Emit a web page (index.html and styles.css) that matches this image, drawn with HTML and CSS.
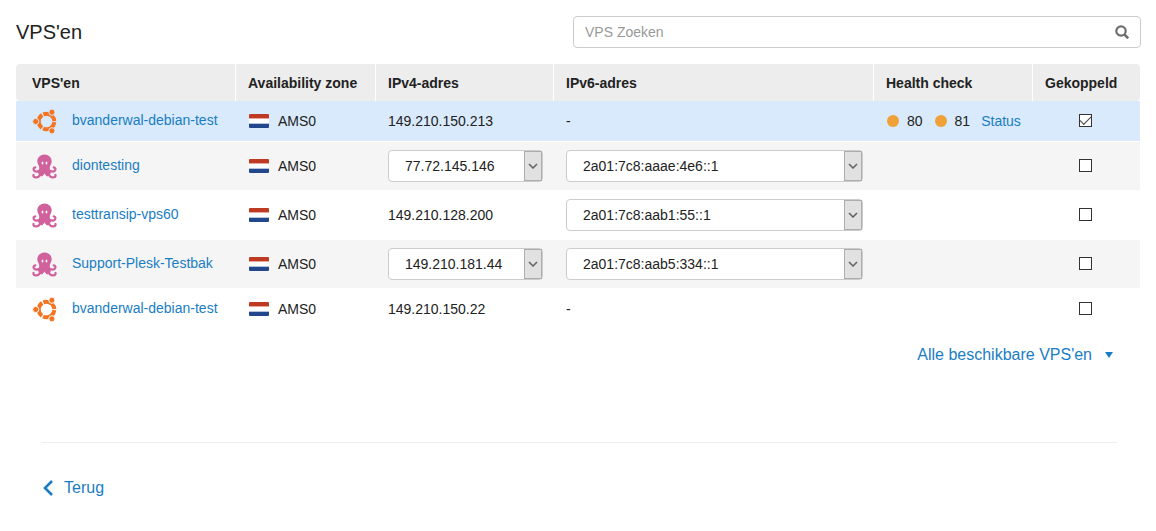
FILE: index.html
```html
<!DOCTYPE html>
<html lang="nl">
<head>
<meta charset="utf-8">
<title>VPS'en</title>
<link rel="stylesheet" href="styles.css">
</head>
<body>
<svg class="sprite" aria-hidden="true">
  <symbol id="ubuntu" viewBox="0 0 25 25">
    <circle cx="14.500" cy="12.500" r="7.800" fill="none" stroke="currentColor" stroke-width="4" stroke-dasharray="15 1.336" stroke-dashoffset="-0.668"/>
    <g fill="currentColor" stroke="var(--row-bg)" stroke-width="1">
      <circle cx="3.700" cy="12.500" r="3.100"/>
      <circle cx="19.900" cy="3.200" r="3.100"/>
      <circle cx="19.900" cy="21.800" r="3.100"/>
    </g>
  </symbol>
  <symbol id="octopus" viewBox="0 0 25 25">
    <path fill="currentColor" d="M12.500.5C8.500.5 5.300 3.500 5.300 7.300c0 2.700 2 4.500 2 6.700 0 2-1.300 3.500-1.300 5l3.500 3.500c1.500-.8 2.600-2 3-3.300.4 1.300 1.500 2.500 3 3.300L19 19c0-1.500-1.300-3-1.300-5 0-2.200 2-4 2-6.700 0-3.800-3.200-6.800-7.200-6.800z"/>
    <g fill="none" stroke="currentColor" stroke-width="2.200" stroke-linecap="round">
      <path d="M8.500 15.500c-1.500 2.200-4.500 2.500-6 1.500-1.600-1.200-1.200-3.400.8-3.700"/>
      <path d="M8.500 20c-1.200 2.700-3.500 3.800-5.500 3.300-1.300-.3-1.800-1.300-1.500-2.300"/>
      <path d="M16.500 15.500c1.500 2.200 4.500 2.500 6 1.500 1.600-1.200 1.200-3.400-.8-3.700"/>
      <path d="M16.500 20c1.200 2.700 3.500 3.800 5.500 3.300 1.300-.3 1.800-1.300 1.500-2.300"/>
    </g>
    <ellipse cx="10.500" cy="9" rx=".9" ry="1.500" fill="#fff"/>
    <ellipse cx="14.500" cy="9" rx=".9" ry="1.500" fill="#fff"/>
  </symbol>
  <symbol id="flag" viewBox="0 0 20 14">
    <rect width="20" height="14" rx="1" fill="#fff"/>
    <path fill="#bf3a22" d="M1 0h18a1 1 0 0 1 1 1v3H0V1a1 1 0 0 1 1-1z"/>
    <path fill="#e9a79c" d="M0 4h20v1H0z"/>
    <path fill="#b5c3dc" d="M0 9h20v1H0z"/>
    <path fill="#22478b" d="M0 10h20v3a1 1 0 0 1-1 1H1a1 1 0 0 1-1-1z"/>
  </symbol>
  <symbol id="chevron" viewBox="0 0 10 6">
    <path d="M1 1l4 4 4-4" fill="none" stroke="#606060" stroke-width="1.500"/>
  </symbol>
</svg>

<main class="page">
  <header class="toolbar">
    <h1 class="title">VPS'en</h1>
    <form class="search">
      <input class="search-input" type="text" placeholder="VPS Zoeken" aria-label="VPS Zoeken">
      <button class="search-button" type="button" aria-label="Zoeken">
        <svg width="14" height="14" viewBox="0 0 14 14"><g fill="none" stroke="#6e6e6e"><circle cx="6" cy="6" r="4.700" stroke-width="2.200"/><path d="M9.300 9.300l3.900 4" stroke-width="2.600"/></g></svg>
      </button>
    </form>
  </header>

  <table class="vps-table">
    <colgroup>
      <col class="col-name"><col class="col-zone"><col class="col-ipv4"><col><col class="col-health"><col class="col-linked">
    </colgroup>
    <thead>
      <tr><th>VPS'en</th><th>Availability zone</th><th>IPv4-adres</th><th>IPv6-adres</th><th>Health check</th><th>Gekoppeld</th></tr>
    </thead>
    <tbody>
      <tr class="short selected">
        <td><div class="name"><svg class="os ubuntu"><use href="#ubuntu"/></svg><a href="#">bvanderwal-debian-test</a></div></td>
        <td><div class="zone"><svg class="flag"><use href="#flag"/></svg>AMS0</div></td>
        <td>149.210.150.213</td>
        <td>-</td>
        <td><div class="health"><span class="port">80</span><span class="port">81</span><a href="#">Status</a></div></td>
        <td class="check"><input type="checkbox" aria-label="bvanderwal-debian-test gekoppeld" checked></td>
      </tr>
      <tr class="striped">
        <td><div class="name"><svg class="os octopus"><use href="#octopus"/></svg><a href="#">diontesting</a></div></td>
        <td><div class="zone"><svg class="flag"><use href="#flag"/></svg>AMS0</div></td>
        <td><div class="picker"><select aria-label="IPv4-adres diontesting"><option>77.72.145.146</option></select><span class="arrow"><svg width="10" height="6"><use href="#chevron"/></svg></span></div></td>
        <td><div class="picker"><select aria-label="IPv6-adres diontesting"><option>2a01:7c8:aaae:4e6::1</option></select><span class="arrow"><svg width="10" height="6"><use href="#chevron"/></svg></span></div></td>
        <td></td>
        <td class="check"><input type="checkbox" aria-label="diontesting gekoppeld"></td>
      </tr>
      <tr>
        <td><div class="name"><svg class="os octopus"><use href="#octopus"/></svg><a href="#">testtransip-vps60</a></div></td>
        <td><div class="zone"><svg class="flag"><use href="#flag"/></svg>AMS0</div></td>
        <td>149.210.128.200</td>
        <td><div class="picker"><select aria-label="IPv6-adres testtransip-vps60"><option>2a01:7c8:aab1:55::1</option></select><span class="arrow"><svg width="10" height="6"><use href="#chevron"/></svg></span></div></td>
        <td></td>
        <td class="check"><input type="checkbox" aria-label="testtransip-vps60 gekoppeld"></td>
      </tr>
      <tr class="striped">
        <td><div class="name"><svg class="os octopus"><use href="#octopus"/></svg><a href="#">Support-Plesk-Testbak</a></div></td>
        <td><div class="zone"><svg class="flag"><use href="#flag"/></svg>AMS0</div></td>
        <td><div class="picker"><select aria-label="IPv4-adres Support-Plesk-Testbak"><option>149.210.181.44</option></select><span class="arrow"><svg width="10" height="6"><use href="#chevron"/></svg></span></div></td>
        <td><div class="picker"><select aria-label="IPv6-adres Support-Plesk-Testbak"><option>2a01:7c8:aab5:334::1</option></select><span class="arrow"><svg width="10" height="6"><use href="#chevron"/></svg></span></div></td>
        <td></td>
        <td class="check"><input type="checkbox" aria-label="Support-Plesk-Testbak gekoppeld"></td>
      </tr>
      <tr class="short">
        <td><div class="name"><svg class="os ubuntu"><use href="#ubuntu"/></svg><a href="#">bvanderwal-debian-test</a></div></td>
        <td><div class="zone"><svg class="flag"><use href="#flag"/></svg>AMS0</div></td>
        <td>149.210.150.22</td>
        <td>-</td>
        <td></td>
        <td class="check"><input type="checkbox" aria-label="bvanderwal-debian-test gekoppeld"></td>
      </tr>
    </tbody>
  </table>

  <div class="more">
    <button class="more-button" type="button">Alle beschikbare VPS'en<svg width="8" height="6" viewBox="0 0 8 6"><path d="M0 0h8L4 6z" fill="currentColor"/></svg></button>
  </div>

  <footer class="footer">
    <a class="back" href="#"><svg width="11" height="16" viewBox="0 0 11 16"><path d="M9 1L2 8l7 7" fill="none" stroke="currentColor" stroke-width="2.600"/></svg>Terug</a>
  </footer>
</main>
</body>
</html>
```
FILE: styles.css
```css
* { box-sizing: border-box; }

body {
  margin: 0;
  background: #fff;
  color: #222;
  font: 14px/20px "Liberation Sans", Arial, sans-serif;
}

a { color: #1a7dc4; text-decoration: none; }
svg { flex: none; }
.sprite { position: absolute; width: 0; height: 0; }
.page { padding: 16px; }

.toolbar {
  display: flex;
  justify-content: space-between;
  align-items: center;
  margin-bottom: 16px;
}
.title { margin: 0; font-size: 20px; line-height: 24px; font-weight: 400; }
.search {
  display: flex;
  align-items: center;
  width: 568px;
  height: 32px;
  margin-right: -1px;
  border: 1px solid #ccc;
  border-radius: 4px;
}
.search-input {
  flex: 1;
  min-width: 0;
  padding: 0 11px;
  border: 0;
  background: none;
  font: inherit;
  outline: 0;
}
.search-input::placeholder { color: #999; }
.search-button {
  display: flex;
  padding: 0 11px;
  border: 0;
  background: none;
}

.vps-table {
  width: 100%;
  table-layout: fixed;
  border-collapse: separate;
  border-spacing: 0;
}
.col-name { width: 220px; }
.col-zone { width: 140px; }
.col-ipv4 { width: 178px; }
.col-health { width: 159px; }
.col-linked { width: 107px; }

th {
  height: 37px;
  padding: 1px 0 0 12px;
  border-right: 1px solid #fff;
  background: #ededed;
  font-weight: 700;
  text-align: left;
  white-space: nowrap;
}
th:first-child { padding-left: 16px; border-radius: 4px 0 0 4px; }
th:last-child { border-right: 0; border-radius: 0 4px 4px 0; }

tr { --row-bg: #fff; }
.selected { --row-bg: #d8eafb; }
.striped { --row-bg: #f5f5f5; }
td {
  height: 49px;
  padding: 0 11px 0 12px;
  border-bottom: 1px solid #fff;
  background: var(--row-bg);
  white-space: nowrap;
}
.short td { height: 41px; }
td:first-child { padding: 0 0 0 16px; }

.name, .zone, .health { display: flex; align-items: center; }
.name { gap: 15px; }
.name a { padding-bottom: 2px; }
.os { width: 25px; height: 25px; }
.ubuntu { color: #f47521; }
.octopus { color: #d1619c; }
.zone { gap: 9px; }
.flag { width: 20px; height: 14px; margin-left: 1px; }

.health { gap: 11px; }
.port { display: flex; align-items: center; gap: 8px; }
.port::before {
  content: "";
  width: 12px;
  height: 12px;
  margin-left: 1px;
  border-radius: 50%;
  background: #efa036;
}

.picker { position: relative; }
select {
  display: block;
  width: 100%;
  height: 32px;
  padding: 0 20px 0 16px;
  border: 1px solid #ccc;
  border-radius: 4px;
  background: #fff;
  color: inherit;
  font: inherit;
  appearance: none;
}
.arrow {
  position: absolute;
  top: 1px;
  right: 1px;
  bottom: 1px;
  display: flex;
  align-items: center;
  justify-content: center;
  width: 18px;
  border: 1px solid #adadad;
  background: #e1e1e1;
  pointer-events: none;
}

td.check { padding: 0 3px 4px 0; text-align: center; }
.check input {
  display: inline-grid;
  place-items: center;
  width: 13px;
  height: 13px;
  margin: 0;
  border: 1px solid #333;
  background: #fff;
  vertical-align: middle;
  appearance: none;
}
.check input:checked::after {
  content: "";
  width: 10px;
  height: 5px;
  margin-bottom: 3px;
  border: solid #444;
  border-width: 0 0 1px 1px;
  transform: rotate(-45deg);
}

.more {
  display: flex;
  justify-content: flex-end;
  padding: 15px 27px 0 0;
}
.more-button {
  display: flex;
  align-items: center;
  gap: 13px;
  padding: 0;
  border: 0;
  background: none;
  color: #1a7dc4;
  font: 16px/20px "Liberation Sans", Arial, sans-serif;
}

.footer {
  margin: 77px 23px 0 25px;
  padding: 35px 2px 0;
  border-top: 1px solid #ededed;
}
.back {
  display: inline-flex;
  align-items: center;
  gap: 10px;
  font-size: 16px;
}
```
